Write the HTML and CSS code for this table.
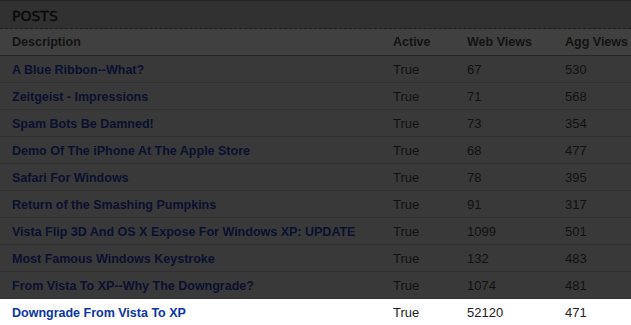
FILE: index.html
```html
<!DOCTYPE html>
<html>
<head>
<meta charset="utf-8">
<link rel="stylesheet" href="styles.css">
</head>
<body>
<div class="panel">
  <div class="title">POSTS</div>
  <table class="posts">
    <thead>
      <tr><th class="c-desc">Description</th><th class="c-act">Active</th><th class="c-web">Web Views</th><th class="c-agg">Agg Views</th></tr>
    </thead>
    <tbody>
      <tr><td><a>A Blue Ribbon--What?</a></td><td>True</td><td>67</td><td>530</td></tr>
      <tr><td><a>Zeitgeist - Impressions</a></td><td>True</td><td>71</td><td>568</td></tr>
      <tr><td><a>Spam Bots Be Damned!</a></td><td>True</td><td>73</td><td>354</td></tr>
      <tr><td><a>Demo Of The iPhone At The Apple Store</a></td><td>True</td><td>68</td><td>477</td></tr>
      <tr><td><a>Safari For Windows</a></td><td>True</td><td>78</td><td>395</td></tr>
      <tr><td><a>Return of the Smashing Pumpkins</a></td><td>True</td><td>91</td><td>317</td></tr>
      <tr><td><a>Vista Flip 3D And OS X Expose For Windows XP: UPDATE</a></td><td>True</td><td>1099</td><td>501</td></tr>
      <tr><td><a>Most Famous Windows Keystroke</a></td><td>True</td><td>132</td><td>483</td></tr>
      <tr><td><a>From Vista To XP--Why The Downgrade?</a></td><td>True</td><td>1074</td><td>481</td></tr>
      <tr class="lit"><td><a>Downgrade From Vista To XP</a></td><td>True</td><td>52120</td><td>471</td></tr>
    </tbody>
  </table>
</div>
</body>
</html>
```
FILE: styles.css
```css
html, body { margin: 0; padding: 0; background: #393939; }
.panel { width: 631px; border-top: 1px solid #242424; }
.title {
  height: 28px;
  box-sizing: border-box;
  background: #303130;
  border-bottom: 1px dashed #1e1e1e;
  padding: 7px 0 0 12px;
  font: 14px "DejaVu Sans", sans-serif;
  color: #080808;
  -webkit-text-stroke: 0.3px #080808;
}
.posts { width: 631px; border-collapse: collapse; table-layout: fixed; }
.posts th {
  height: 26px;
  background: #404040;
  border-bottom: 1px solid #262626;
  text-align: left;
  font: bold 12.5px "Liberation Sans", Arial, sans-serif;
  color: #131313;
  padding: 0;
  white-space: nowrap;
}
.posts td {
  height: 26px;
  border-bottom: 1px solid #313131;
  padding: 0;
  font: 13px "Liberation Sans", Arial, sans-serif;
  color: #111;
  white-space: nowrap;
}
.c-desc { width: 381px; padding-left: 12px !important; }
.c-act { width: 74px; }
.c-web { width: 98px; }
.posts td:first-child { padding-left: 12px; }
.posts a { font: bold 12.5px "Liberation Sans", Arial, sans-serif; color: #0a1030; }
.posts tr.lit td { background: #fff; color: #222; border-bottom: none; }
.posts tr.lit a { color: #0b35a3; }
```
